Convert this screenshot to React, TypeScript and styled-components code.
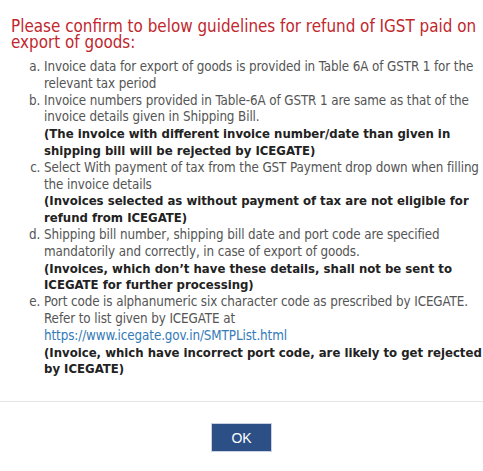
import React from 'react';
import styled, { createGlobalStyle } from 'styled-components';

const GlobalStyle = createGlobalStyle`
  html, body {
    margin: 0;
    padding: 0;
    background: #fff;
  }
  body {
    font-family: "DejaVu Sans", Verdana, sans-serif;
  }
`;

const Dialog = styled.div`
  width: 483px;
  display: flex;
  flex-direction: column;
`;

const Body = styled.div`
  padding: 18px 0 0 11px;
`;

const Heading = styled.h4`
  margin: 0;
  color: #c1272d;
  font-family: "DejaVu Sans Condensed", "DejaVu Sans", sans-serif;
  font-stretch: condensed;
  font-size: 16.9px;
  font-weight: normal;
  line-height: 16px;
`;

const GuideList = styled.ol`
  list-style: lower-alpha;
  margin: 9px 0 0;
  padding-left: 33px;
  color: #555;
  font-family: "DejaVu Sans Condensed", "DejaVu Sans", sans-serif;
  font-stretch: condensed;
  font-size: 13.3px;
  letter-spacing: -0.1px;
  line-height: 16.8px;
`;

const Item = styled.li`
  padding-left: 0;
`;

const Note = styled.strong`
  display: block;
  color: #222;
  font-size: 0.98em;
  font-weight: bold;
  letter-spacing: 0;
`;

const Link = styled.a`
  color: #337ab7;
  text-decoration: none;
`;

const Footer = styled.div`
  margin-top: 23px;
  border-top: 1px solid #e5e5e5;
  padding: 21px 0;
  display: flex;
  justify-content: center;
`;

const OkButton = styled.button`
  width: 61px;
  height: 29px;
  background: #2c4f86;
  border: 1px solid #c9d1e2;
  color: #fff;
  font-family: "Liberation Sans", Arial, sans-serif;
  font-size: 14px;
  cursor: pointer;
`;

const App: React.FC = () => (
  <Dialog>
    <GlobalStyle />
    <Body>
      <Heading>Please confirm to below guidelines for refund of IGST paid on export of goods:</Heading>
      <GuideList>
        <Item>Invoice data for export of goods is provided in Table 6A of GSTR 1 for the relevant tax period</Item>
        <Item>
          Invoice numbers provided in Table-6A of GSTR 1 are same as that of the invoice details given in Shipping Bill.
          <Note>(The invoice with different invoice number/date than given in shipping bill will be rejected by ICEGATE)</Note>
        </Item>
        <Item>
          Select With payment of tax from the GST Payment drop down when filling the invoice details
          <Note>(Invoices selected as without payment of tax are not eligible for refund from ICEGATE)</Note>
        </Item>
        <Item>
          Shipping bill number, shipping bill date and port code are specified mandatorily and correctly, in case of export of goods.
          <Note>(Invoices, which don’t have these details, shall not be sent to ICEGATE for further processing)</Note>
        </Item>
        <Item>
          Port code is alphanumeric six character code as prescribed by ICEGATE. Refer to list given by ICEGATE at
          <br />
          <Link href="#">https://www.icegate.gov.in/SMTPList.html</Link>
          <Note>(Invoice, which have incorrect port code, are likely to get rejected by ICEGATE)</Note>
        </Item>
      </GuideList>
    </Body>
    <Footer>
      <OkButton type="button">OK</OkButton>
    </Footer>
  </Dialog>
);

export default App;
